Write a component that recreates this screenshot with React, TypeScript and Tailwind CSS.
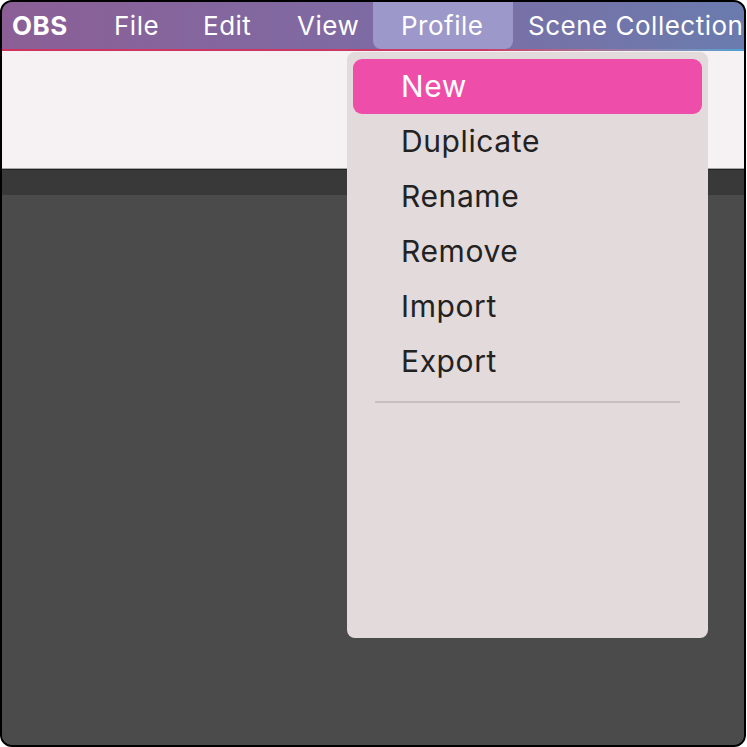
import React from "react";

const items = ["New", "Duplicate", "Rename", "Remove", "Import", "Export"];

export default function App() {
  return (
    <div
      className="relative w-[747px] h-[747px] bg-white overflow-hidden"
      style={{ fontFamily: "Inter, 'Noto Sans', sans-serif" }}
    >
      {/* Window */}
      <div className="w-[746px] h-[747px] border-2 border-black rounded-[12px] overflow-hidden flex flex-col bg-[#4b4b4b]">
        {/* Menu bar */}
        <div className="h-[47px] shrink-0 flex items-stretch bg-gradient-to-r from-[#8b5f96] via-[#7e6ba3] to-[#6a7bad] text-white text-[26px] tracking-[0.5px]">
          <div className="w-[112px] flex items-center pl-[10px] font-bold">OBS</div>
          <div className="w-[89px] flex items-center">File</div>
          <div className="w-[94px] flex items-center">Edit</div>
          <div className="w-[76px] flex items-center">View</div>
          <div className="w-[140px] flex items-center pl-[28px] bg-[#9c98c9] rounded-b-[8px]">
            Profile
          </div>
          <div className="flex items-center pl-[15px] whitespace-nowrap">Scene Collection</div>
        </div>
        <div className="h-[2px] shrink-0 bg-gradient-to-r from-[#d0325e] via-[#c83a66] via-65% to-[#4aa2d4]" />
        {/* Toolbar area */}
        <div className="h-[117px] shrink-0 bg-[#f6f1f2]" />
        <div className="h-[1px] shrink-0 bg-[#a5a5a5]" />
        <div className="h-[1px] shrink-0 bg-[#222222]" />
        <div className="h-[25px] shrink-0 bg-[#393939]" />
        <div className="flex-1 bg-[#4b4b4b]" />
      </div>

      {/* Dropdown */}
      <div className="absolute left-[347px] top-[52px] w-[361px] h-[586px] bg-[#e2dadb] rounded-[8px] pt-[7px] px-[6px]">
        {items.map((it, i) => (
          <div
            key={it}
            className={
              i === 0
                ? "h-[55px] flex items-center pl-[48px] rounded-[9px] bg-[#ee4ea9] text-white text-[30px] tracking-[0.6px]"
                : "h-[55px] flex items-center pl-[48px] text-[#222222] text-[30px] tracking-[0.6px]"
            }
          >
            {it}
          </div>
        ))}
        <div className="mt-[12px] mx-[22px] h-[2px] bg-[#c6bebf]" />
      </div>
    </div>
  );
}
